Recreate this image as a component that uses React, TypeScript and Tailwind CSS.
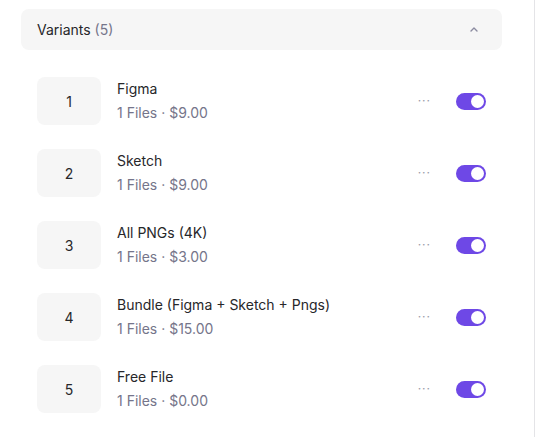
import { useState } from "react";

const variants = [
  { id: 1, name: "Figma", files: 1, price: "$9.00" },
  { id: 2, name: "Sketch", files: 1, price: "$9.00" },
  { id: 3, name: "All PNGs (4K)", files: 1, price: "$3.00" },
  { id: 4, name: "Bundle (Figma + Sketch + Pngs)", files: 1, price: "$15.00" },
  { id: 5, name: "Free File", files: 1, price: "$0.00" },
];

function Toggle({ on, onChange }: { on: boolean; onChange: () => void }) {
  return (
    <button
      onClick={onChange}
      className={`flex h-[17px] w-[30px] items-center rounded-full px-[2px] ${
        on ? "justify-end bg-[#6e48e6]" : "justify-start bg-[#d4d4dc]"
      }`}
    >
      <span className="h-[13px] w-[13px] rounded-full bg-white" />
    </button>
  );
}

export default function App() {
  const [enabled, setEnabled] = useState<Record<number, boolean>>({
    1: true,
    2: true,
    3: true,
    4: true,
    5: true,
  });

  return (
    <div
      className="h-[437px] w-[535px] border-r border-[#e4e4e7] bg-white pt-[9px]"
      style={{ fontFamily: "Inter, 'Noto Sans', sans-serif" }}
    >
      <div className="ml-[21px] w-[481px]">
        <div className="flex h-[41px] items-center justify-between rounded-lg bg-[#f6f6f6] pl-4 pr-6">
          <p className="text-[14px] text-[#27272a]">
            Variants <span className="text-[#75758a]">(5)</span>
          </p>
          <svg width="8" height="5" viewBox="0 0 8 5" fill="none">
            <path d="M1 4l3-3 3 3" stroke="#8b8ba0" strokeWidth="1.4" strokeLinecap="round" strokeLinejoin="round" />
          </svg>
        </div>

        <div className="mt-[27px] flex flex-col gap-6 px-4">
          {variants.map((v) => (
            <div key={v.id} className="flex h-12 items-center">
              <div className="flex h-12 w-16 items-center justify-center rounded-lg bg-[#f6f6f6] text-[14px] text-[#27272a]">
                {v.id}
              </div>
              <div className="ml-4 flex flex-1 flex-col gap-1">
                <p className="text-[14px] leading-5 text-[#27272a]">{v.name}</p>
                <p className="text-[14px] leading-5 text-[#75758a]">
                  {v.files} Files · {v.price}
                </p>
              </div>
              <span className="mr-[25px] text-[12px] leading-none tracking-[1px] text-[#9a9aa8]">···</span>
              <Toggle
                on={enabled[v.id]}
                onChange={() => setEnabled((s) => ({ ...s, [v.id]: !s[v.id] }))}
              />
            </div>
          ))}
        </div>
      </div>
    </div>
  );
}
